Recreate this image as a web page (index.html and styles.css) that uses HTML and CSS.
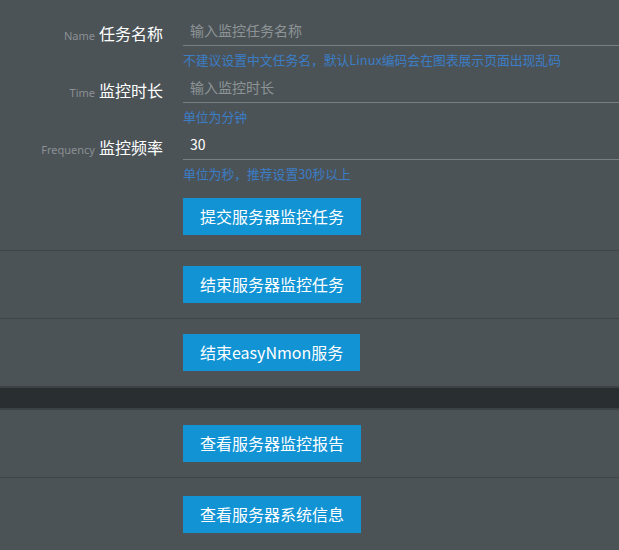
FILE: index.html
```html
<!DOCTYPE html>
<html lang="zh-CN">
<head>
<meta charset="utf-8">
<title>easyNmon</title>
<link rel="stylesheet" href="styles.css">
</head>
<body>
<div class="page">
  <section class="panel form-panel">
    <div class="field">
      <label class="label"><span class="en">Name</span><span class="zh">任务名称</span></label>
      <input class="input" type="text" placeholder="输入监控任务名称">
      <div class="help">不建议设置中文任务名，默认Linux编码会在图表展示页面出现乱码</div>
    </div>
    <div class="field">
      <label class="label"><span class="en">Time</span><span class="zh">监控时长</span></label>
      <input class="input" type="text" placeholder="输入监控时长">
      <div class="help">单位为分钟</div>
    </div>
    <div class="field">
      <label class="label"><span class="en">Frequency</span><span class="zh">监控频率</span></label>
      <input class="input" type="text" value="30">
      <div class="help">单位为秒，推荐设置30秒以上</div>
    </div>
    <div class="actions first">
      <button class="btn">提交服务器监控任务</button>
    </div>
  </section>
  <section class="panel">
    <div class="actions"><button class="btn">结束服务器监控任务</button></div>
  </section>
  <section class="panel no-border">
    <div class="actions"><button class="btn">结束easyNmon服务</button></div>
  </section>
  <div class="divider"></div>
  <section class="panel">
    <div class="actions"><button class="btn">查看服务器监控报告</button></div>
  </section>
  <section class="panel no-border last">
    <div class="actions"><button class="btn">查看服务器系统信息</button></div>
  </section>
</div>
</body>
</html>
```
FILE: styles.css
```css
html, body {
  margin: 0;
  padding: 0;
  background: #4b5357;
}
body {
  font-family: "Noto Sans", "Noto Sans CJK SC", sans-serif;
  color: #ffffff;
}
.page {
  width: 619px;
  height: 550px;
  overflow: hidden;
}
.panel {
  border-bottom: 1px solid #3e4447;
  padding: 15px 0;
}
.form-panel {
  padding-top: 15px;
}
.panel.no-border {
  border-bottom: none;
}
.panel.last {
  padding-top: 18px;
}
.field {
  display: grid;
  grid-template-columns: 163px 1fr;
  column-gap: 20px;
}
.label {
  grid-column: 1;
  grid-row: 1;
  text-align: right;
  line-height: 30px;
  padding-top: 3px;
  height: 28px;
  white-space: nowrap;
}
.en {
  font-size: 11px;
  color: #8b9093;
  margin-right: 4px;
}
.zh {
  font-size: 16px;
  color: #ffffff;
  font-family: "Noto Sans CJK SC", sans-serif;
}
.input {
  grid-column: 2;
  grid-row: 1;
  box-sizing: border-box;
  height: 31px;
  margin: 0;
  padding: 0 7px;
  border: none;
  border-bottom: 1px solid #797e81;
  background: transparent;
  color: #ffffff;
  font-family: "Noto Sans CJK SC", "Noto Sans", sans-serif;
  font-size: 14px;
  outline: none;
}
.input::placeholder {
  color: #8e9396;
}
.help {
  grid-column: 2;
  grid-row: 2;
  font-size: 12.8px;
  line-height: 18px;
  margin: 5px 0 3px;
  color: #3b7dc6;
  font-family: "Noto Sans CJK SC", "Noto Sans", sans-serif;
  white-space: nowrap;
}
.actions {
  padding-left: 183px;
}
.actions.first {
  margin-top: 12px;
}
.btn {
  display: inline-block;
  height: 37px;
  line-height: 37px;
  padding: 0 17px;
  border: none;
  border-radius: 0;
  background: #1193d4;
  color: #ffffff;
  font-family: "Noto Sans CJK SC", "Noto Sans", sans-serif;
  font-size: 16px;
  vertical-align: top;
}
.divider {
  height: 20px;
  background: #292e31;
  border-top: 2px solid #3b4144;
  border-bottom: 2px solid #3b4144;
}
```
